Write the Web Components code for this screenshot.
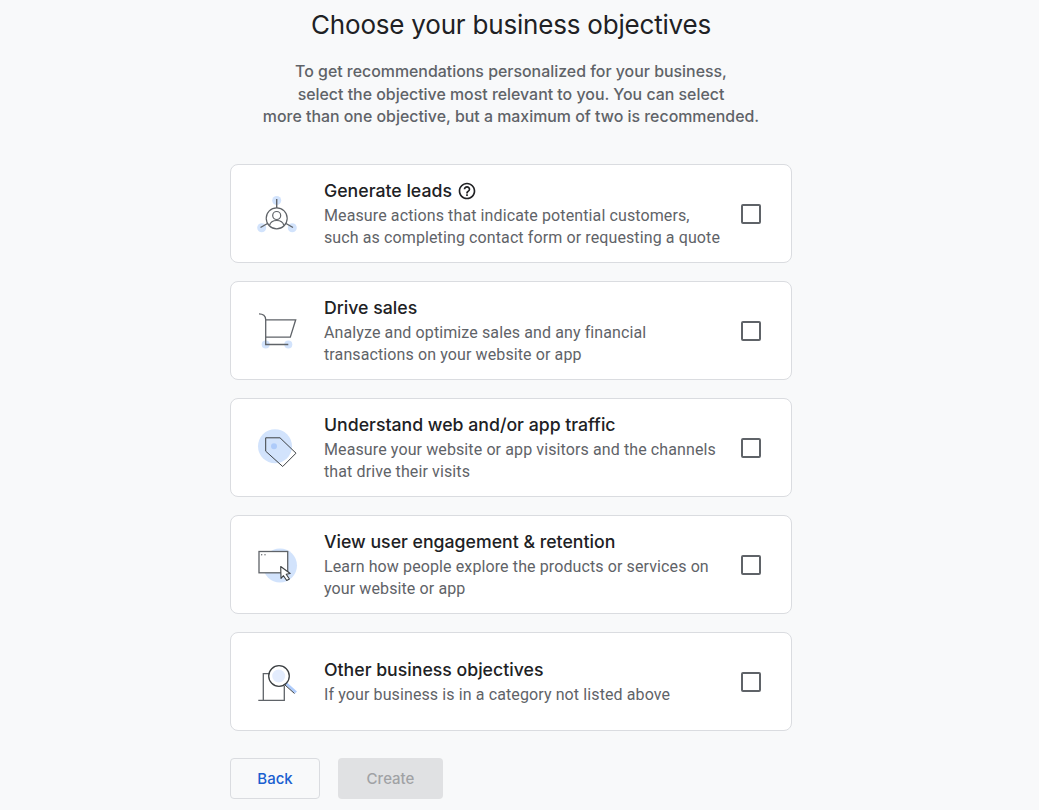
<!DOCTYPE html>
<html lang="en"><head><meta charset="utf-8"><title>Choose your business objectives</title>
<style>
html,body{margin:0;height:810px;overflow:hidden;background:#f8f9fa;}
body{font-family:Roboto,sans-serif;}
</style></head><body>
<template id="tpl-page"><style>
:host{display:block;width:562px;margin-left:230px;box-sizing:border-box;}
.head{display:flex;flex-direction:column;align-items:center;}
h1{margin:8px 0 0;font:400 26px/34px Inter,sans-serif;letter-spacing:-.2px;color:#202124;white-space:nowrap;}
p{margin:19.4px 0 0;font:500 15.9px/22.4px Inter,sans-serif;color:#5f6368;text-align:center;white-space:nowrap;}
.list{display:flex;flex-direction:column;gap:18px;margin-top:34.9px;}
.actions{display:flex;gap:18px;margin-top:27px;}
</style>
<div class="head"><h1><slot name="title"></slot></h1><p><slot name="sub"></slot></p></div>
<div class="list"><slot name="cards"></slot></div>
<div class="actions"><slot name="actions"></slot></div></template>

<template id="tpl-card"><style>
:host{display:flex;align-items:center;box-sizing:border-box;height:99px;background:#fff;border:1px solid #dadce0;border-radius:8px;padding:0 30px 0 22px;}
.icon{flex:none;width:48px;height:48px;display:block;margin-top:1px;}
.text{flex:1;min-width:0;margin-left:23px;padding-top:2px;}
.t{display:flex;align-items:center;gap:4px;margin-bottom:2px;font:500 17.7px/24px Inter,sans-serif;color:#202124;white-space:nowrap;}
.d{font:400 16px/22px Roboto,sans-serif;letter-spacing:.11px;color:#5f6368;white-space:nowrap;}
.cb{flex:none;width:20px;height:20px;box-sizing:border-box;border:2px solid #5f6368;border-radius:2px;margin-top:1px;}
::slotted(svg){margin-left:1px;}
</style>
<div class="icon"><slot name="icon"></slot></div>
<div class="text"><div class="t"><slot name="title"></slot></div><div class="d"><slot name="desc"></slot></div></div>
<div class="cb" role="checkbox" aria-checked="false"></div></template>

<template id="tpl-btn"><style>
:host{display:flex;align-items:center;justify-content:center;box-sizing:border-box;height:41px;padding-top:1px;border-radius:4px;font:500 15px/20px Inter,sans-serif;}
:host([kind=back]){width:90px;background:transparent;border:1px solid #dadce0;color:#1a5fd0;}
:host([kind=create]){width:105px;background:#e0e1e3;color:#a0a2a5;}
</style><slot></slot></template>

<biz-page>
<span slot="title">Choose your business objectives</span>
<span slot="sub">To get recommendations personalized for your business,<br>select the objective most relevant to you. You can select<br>more than one objective, but a maximum of two is recommended.</span>

<objective-card slot="cards">
<svg slot="icon" width="48" height="48" viewBox="0 0 48 48" fill="none" style="display:block;margin:0">
<g fill="#d2e3fc"><circle cx="23.7" cy="10.5" r="4.5"/><circle cx="8.7" cy="37.7" r="4.5"/><circle cx="39.3" cy="37.7" r="4.5"/></g>
<g stroke="#5f6368" stroke-width="1.2"><circle cx="23.7" cy="28.3" r="10.5"/><circle cx="23.7" cy="25.5" r="4"/><path d="M16.5 35.5c1-4 4-5 7.2-5s6.200 1 7.200 5"/></g>
<g stroke="#5f6368" stroke-width="1.4"><path d="M23.700 9v9M14.500 33.500l-7 4M33 33.500l7 4"/></g>
</svg>
<span slot="title">Generate leads</span>
<svg slot="title" width="20" height="20" viewBox="0 0 24 24" fill="#202124" style="display:block;flex:none"><path d="M11 18h2v-2h-2v2zm1-16C6.480 2 2 6.480 2 12s4.480 10 10 10 10-4.480 10-10S17.520 2 12 2zm0 18c-4.410 0-8-3.590-8-8s3.590-8 8-8 8 3.590 8 8-3.590 8-8 8zm0-14c-2.210 0-4 1.790-4 4h2c0-1.100.9-2 2-2s2 .9 2 2c0 2-3 1.750-3 5h2c0-2.250 3-2.500 3-5 0-2.210-1.790-4-4-4z"/></svg>
<span slot="desc">Measure actions that indicate potential customers,<br>such as completing contact form or requesting a quote</span>
</objective-card>

<objective-card slot="cards">
<svg slot="icon" width="48" height="48" viewBox="0 0 48 48" fill="none" style="display:block;margin:0">
<g fill="#d2e3fc"><circle cx="12.700" cy="37.500" r="4"/><circle cx="35.300" cy="37.500" r="4"/></g>
<path d="M6 6.800c4 0 6.700 2 6.700 6V37.500H35.300M12.700 12.800H42.700L37.300 30.200H12.700" stroke="#5f6368" stroke-width="1.300"/>
</svg>
<span slot="title">Drive sales</span>
<span slot="desc">Analyze and optimize sales and any financial<br>transactions on your website or app</span>
</objective-card>

<objective-card slot="cards">
<svg slot="icon" width="48" height="48" viewBox="0 0 48 48" fill="none" style="display:block;margin:0">
<circle cx="22" cy="22.200" r="17" fill="#d2e3fc"/>
<path d="M12.700 13.800H27L43 29.200 29.700 42.500 12.700 27.200Z" stroke="#3c4043" stroke-width="1"/>
<circle cx="21" cy="22.200" r="3" fill="#aecbfa"/>
</svg>
<span slot="title">Understand web and/or app traffic</span>
<span slot="desc">Measure your website or app visitors and the channels<br>that drive their visits</span>
</objective-card>

<objective-card slot="cards">
<svg slot="icon" width="48" height="48" viewBox="0 0 48 48" fill="none" style="display:block;margin:0">
<circle cx="27" cy="24.500" r="17" fill="#d2e3fc"/>
<rect x="6" y="10.500" width="28.700" height="21.300" fill="#fff" stroke="#5f6368" stroke-width="1.300"/>
<g fill="#5f6368"><circle cx="8.700" cy="13.800" r=".7"/><circle cx="12" cy="13.800" r=".7"/></g>
<path d="M27.700 25.500l9.500 7-4 .8 3.200 4.700-2.700 1.500-3.200-4.800-2.500 2.600Z" fill="#fff" stroke="#3c4043" stroke-width="1.100" stroke-linejoin="round"/>
</svg>
<span slot="title">View user engagement &amp; retention</span>
<span slot="desc">Learn how people explore the products or services on<br>your website or app</span>
</objective-card>

<objective-card slot="cards">
<svg slot="icon" width="48" height="48" viewBox="0 0 48 48" fill="none" style="display:block;margin:0">
<path d="M18 15.700H10.300V42.300M5.300 42.300H31.300V28" stroke="#5f6368" stroke-width="1.300"/>
<path d="M33 25.500l10 9" stroke="#aecbfa" stroke-width="3"/>
<path d="M32 27l9.500 8.500" stroke="#3c4043" stroke-width="1"/>
<circle cx="26" cy="18" r="10.300" fill="#fff" stroke="#3c4043" stroke-width="1.300"/>
<circle cx="25.700" cy="18" r="6.500" fill="#e3ecfd"/>
</svg>
<span slot="title">Other business objectives</span>
<span slot="desc">If your business is in a category not listed above</span>
</objective-card>

<biz-button slot="actions" kind="back">Back</biz-button>
<biz-button slot="actions" kind="create">Create</biz-button>
</biz-page>
<script>
function def(name,id){customElements.define(name,class extends HTMLElement{constructor(){super();this.attachShadow({mode:'open'}).appendChild(document.getElementById(id).content.cloneNode(true));}});}
def('biz-page','tpl-page');def('objective-card','tpl-card');def('biz-button','tpl-btn');
</script>
</body></html>
